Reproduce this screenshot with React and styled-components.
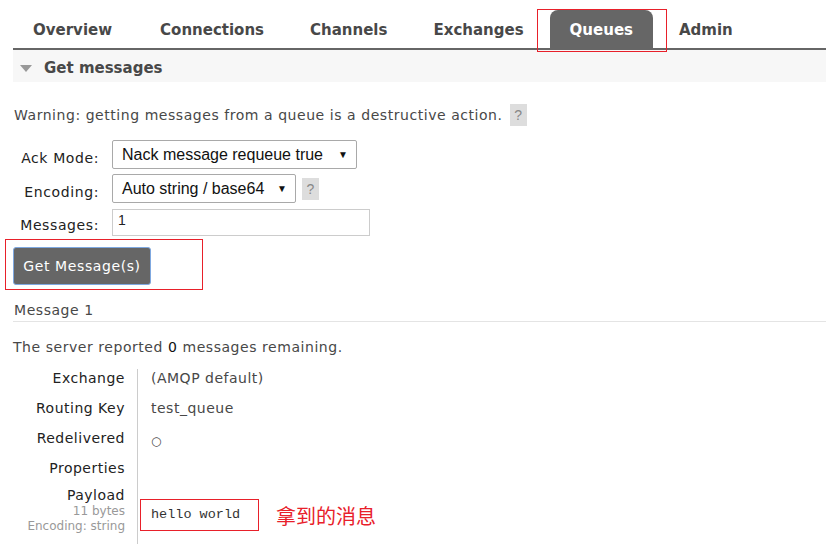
import React from "react";
import styled, { createGlobalStyle } from "styled-components";

const GlobalStyle = createGlobalStyle`
  html, body {
    margin: 0;
    padding: 0;
    background: #fff;
  }
  body {
    font-family: "DejaVu Sans", Verdana, sans-serif;
    font-size: 14px;
    color: #484848;
  }
`;

const tabs = ["Overview", "Connections", "Channels", "Exchanges", "Queues", "Admin"];

const details = [
  { label: "Exchange", value: "(AMQP default)", h: 30 },
  { label: "Routing Key", value: "test_queue", h: 30 },
  { label: "Redelivered", value: "○", h: 30, small: true },
  { label: "Properties", value: "", h: 27 },
];

const App = () => {
  return (
    <Page>
      <GlobalStyle />
      <TabBar>
        {tabs.map((t) => (
          <Tab key={t} active={t === "Queues"}>
            {t}
            {t === "Queues" && <Mark />}
          </Tab>
        ))}
      </TabBar>

      <SectionHead>
        <Arrow />
        Get messages
      </SectionHead>

      <Warning>
        Warning: getting messages from a queue is a destructive action.
        <Help>?</Help>
      </Warning>

      <Form>
        <Label>Ack Mode:</Label>
        <Field>
          <Select w={245}>
            Nack message requeue true
            <Caret>▼</Caret>
          </Select>
        </Field>
        <Label>Encoding:</Label>
        <Field>
          <Select w={184}>
            Auto string / base64
            <Caret>▼</Caret>
          </Select>
          <Help>?</Help>
        </Field>
        <Label>Messages:</Label>
        <Field>
          <Input>1</Input>
        </Field>
      </Form>

      <ButtonWrap>
        <Button>Get Message(s)</Button>
        <Mark />
      </ButtonWrap>

      <MessageTitle>Message 1</MessageTitle>
      <Reported>
        The server reported <b>0</b> messages remaining.
      </Reported>

      <Table>
        {details.map((d) => (
          <Row key={d.label} h={d.h}>
            <Key>{d.label}</Key>
            <Value small={d.small}>{d.value}</Value>
          </Row>
        ))}
        <Row h={60}>
          <Key>
            Payload
            <Sub>11 bytes</Sub>
            <Sub>Encoding: string</Sub>
          </Key>
          <PayloadCell>
            <Pre>
              hello world
              <Mark />
            </Pre>
            <Note>拿到的消息</Note>
          </PayloadCell>
        </Row>
      </Table>
    </Page>
  );
};

const Page = styled.div`
  width: 826px;
  height: 544px;
  overflow: hidden;
  padding-left: 13px;
  box-sizing: border-box;
`;

const Mark = styled.span`
  position: absolute;
  left: -13px;
  right: -14px;
  top: -1px;
  bottom: -4px;
  border: 1px solid #e8202a;
  pointer-events: none;
`;

const TabBar = styled.div`
  display: flex;
  align-items: flex-end;
  height: 48px;
  border-bottom: 2px solid #666;
  box-sizing: content-box;
`;

const Tab = styled.div`
  position: relative;
  height: 38px;
  line-height: 40px;
  padding: 0 20px;
  margin-right: 6px;
  font-size: 15px;
  font-weight: bold;
  border-radius: 8px 8px 0 0;
  color: ${(p) => (p.active ? "#fff" : "#484848")};
  background: ${(p) => (p.active ? "#666" : "transparent")};
  &:first-child {
    margin-right: 8px;
  }
`;

const SectionHead = styled.div`
  display: flex;
  align-items: center;
  height: 32px;
  padding-top: 4px;
  box-sizing: border-box;
  background: #f7f7f7;
  font-size: 15px;
  font-weight: bold;
  color: #484848;
`;

const Arrow = styled.span`
  width: 0;
  height: 0;
  margin: 0 12px 0 7px;
  border-left: 6px solid transparent;
  border-right: 6px solid transparent;
  border-top: 7px solid #999;
`;

const Warning = styled.div`
  display: flex;
  align-items: center;
  margin-top: 22px;
  margin-left: 1px;
  height: 22px;
  letter-spacing: 0.55px;
  gap: 7px;
`;

const Help = styled.span`
  display: inline-flex;
  align-items: center;
  justify-content: center;
  width: 17px;
  height: 22px;
  background: #ddd;
  color: #888;
  font-family: "Liberation Sans", Arial, sans-serif;
  font-size: 14px;
  letter-spacing: 0;
`;

const Form = styled.div`
  display: grid;
  grid-template-columns: 86px auto;
  column-gap: 13px;
  row-gap: 5px;
  margin-top: 14px;
  align-items: center;
`;

const Label = styled.div`
  text-align: right;
  color: #222;
  padding-top: 6px;
  letter-spacing: 0.6px;
`;

const Field = styled.div`
  display: flex;
  align-items: center;
  gap: 6px;
`;

const Select = styled.div`
  display: flex;
  align-items: center;
  justify-content: space-between;
  width: ${(p) => p.w}px;
  height: 29px;
  box-sizing: border-box;
  padding: 0 8px 0 9px;
  border: 1px solid #a9a9a9;
  border-radius: 2px;
  font-family: "Liberation Sans", Arial, sans-serif;
  font-size: 16px;
  color: #111;
`;

const Caret = styled.span`
  font-size: 10px;
  color: #111;
`;

const Input = styled.div`
  width: 258px;
  height: 27px;
  margin-top: 1px;
  box-sizing: border-box;
  border: 1px solid #ccc;
  padding: 2px 5px;
  font-family: "Liberation Sans", Arial, sans-serif;
  font-size: 14px;
  color: #222;
`;

const ButtonWrap = styled.div`
  position: relative;
  display: inline-block;
  margin-top: 11px;
  & > span {
    left: -8px;
    right: -52px;
    top: -8px;
    bottom: -5px;
  }
`;

const Button = styled.div`
  width: 138px;
  height: 38px;
  box-sizing: border-box;
  display: flex;
  align-items: center;
  justify-content: center;
  background: #666;
  border: 1px solid #7fa8e0;
  border-radius: 3px;
  color: #fff;
  letter-spacing: 0.6px;
`;

const MessageTitle = styled.div`
  margin-top: 17px;
  padding: 0 0 3px 1px;
  letter-spacing: 0.55px;
  border-bottom: 1px solid #e4e4e4;
`;

const Reported = styled.div`
  margin-top: 17px;
  letter-spacing: 0.55px;
  b {
    font-weight: normal;
    color: #111;
  }
`;

const Table = styled.div`
  margin-top: 14px;
  display: flex;
  flex-direction: column;
`;

const Row = styled.div`
  display: grid;
  grid-template-columns: 125px 1fr;
  height: ${(p) => p.h}px;
`;

const Key = styled.div`
  display: flex;
  flex-direction: column;
  align-items: flex-end;
  padding-right: 12px;
  border-right: 1px solid #ccc;
  color: #222;
  line-height: 18px;
  letter-spacing: 0.5px;
`;

const Sub = styled.span`
  font-size: 12px;
  line-height: 15px;
  letter-spacing: 0;
  color: #999;
`;

const Value = styled.div`
  padding-left: 13px;
  padding-top: ${(p) => (p.small ? "3px" : "0")};
  font-size: ${(p) => (p.small ? "12px" : "14px")};
  line-height: 18px;
  letter-spacing: 0.5px;
`;

const PayloadCell = styled.div`
  display: flex;
  align-items: center;
  height: 32px;
  margin-top: 13px;
`;

const Pre = styled.div`
  position: relative;
  margin-left: 13px;
  width: 106px;
  font-family: "Liberation Mono", "Courier New", monospace;
  font-size: 13.5px;
  line-height: 18px;
  color: #333;
  & > span {
    left: -11px;
    right: -2px;
    top: -7px;
    bottom: -7px;
  }
`;

const Note = styled.div`
  margin-left: 19px;
  font-family: "Noto Sans CJK SC", sans-serif;
  font-size: 20px;
  color: #e8202a;
`;

export default App;
